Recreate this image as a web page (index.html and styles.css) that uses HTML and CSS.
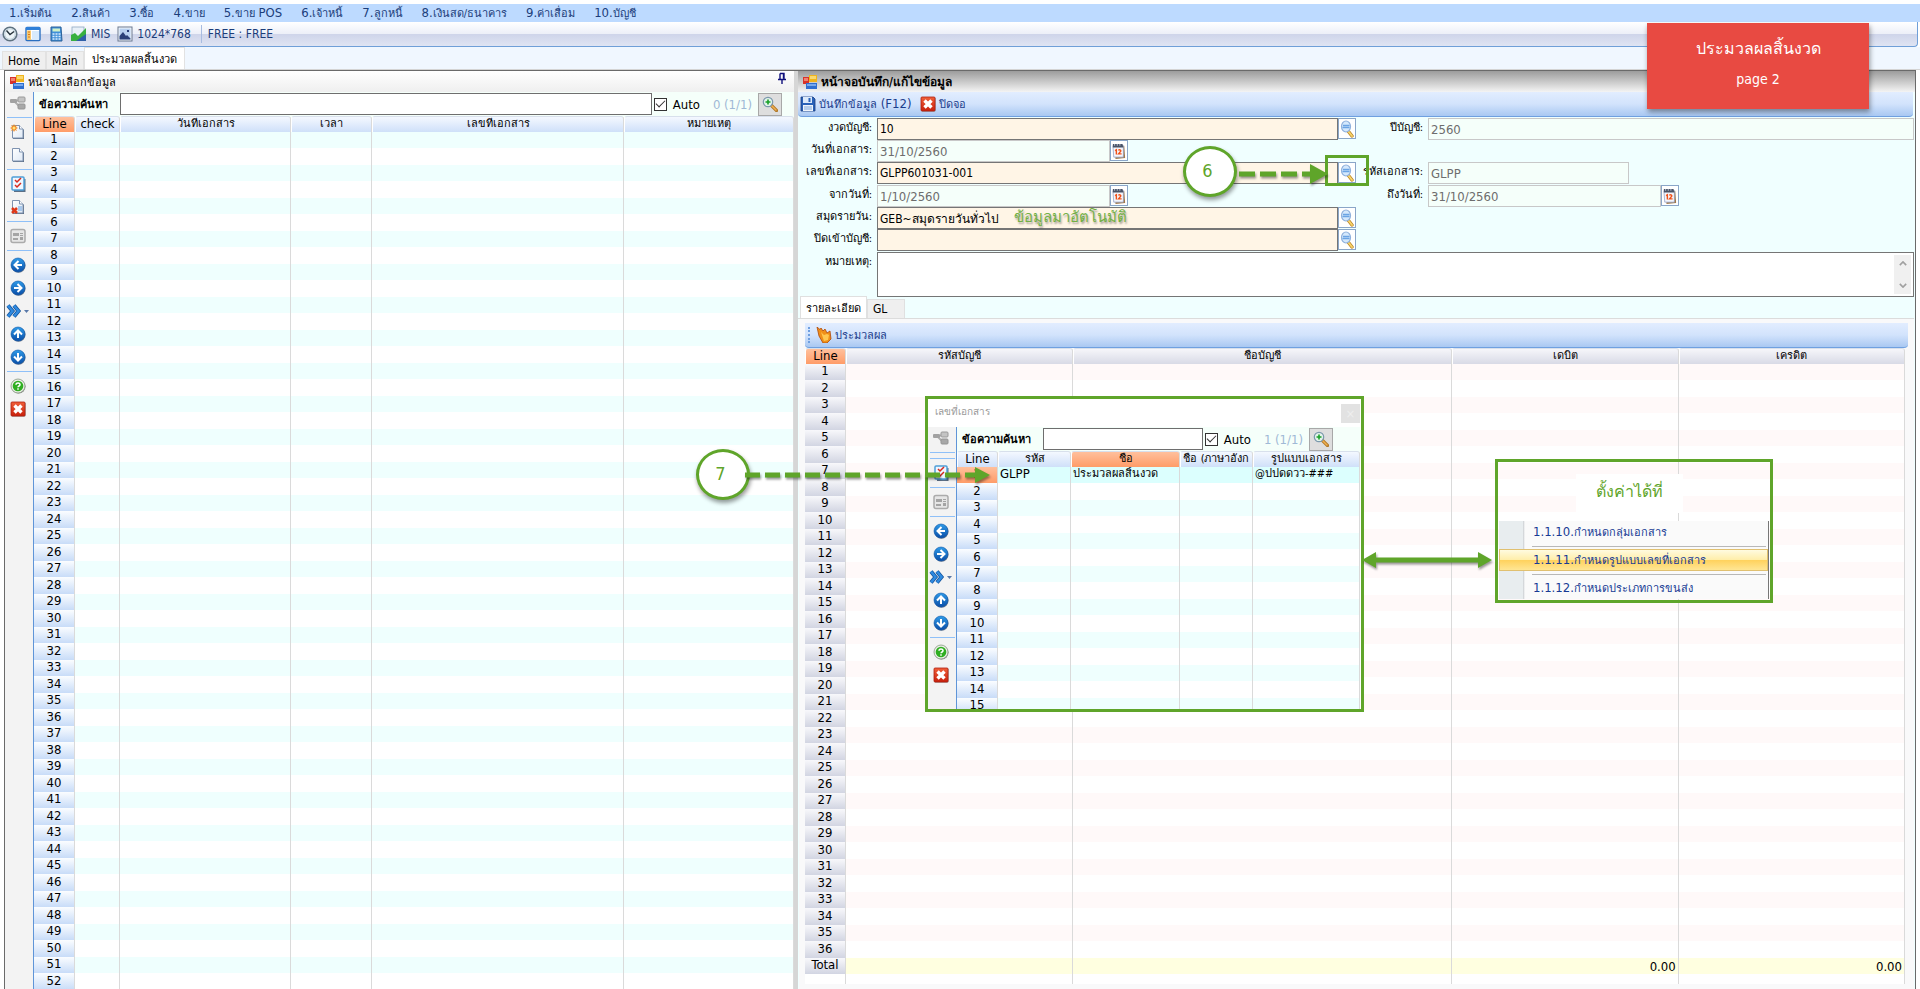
FILE: index.html
```html
<!DOCTYPE html>
<html lang="th">
<head>
<meta charset="utf-8">
<title>ประมวลผลสิ้นงวด</title>
<link rel="stylesheet" href="styles.css">
</head>
<body>
<svg class="sprite" aria-hidden="true">
  <defs>
    <linearGradient id="gBlue" x1="0" y1="0" x2="0" y2="1"><stop offset="0" stop-color="#2f9be8"/><stop offset="1" stop-color="#0a4ea8"/></linearGradient>
    <linearGradient id="gRed" x1="0" y1="0" x2="0" y2="1"><stop offset="0" stop-color="#f0603a"/><stop offset="1" stop-color="#c8200c"/></linearGradient>
    <linearGradient id="gPage" x1="0" y1="0" x2="1" y2="1"><stop offset="0" stop-color="#ffffff"/><stop offset="1" stop-color="#dfe9f5"/></linearGradient>
    <symbol id="i-form" viewBox="0 0 16 16"><rect x="1" y="3" width="6" height="7" fill="#d8322a"/><rect x="2" y="4" width="4" height="3" fill="#f08070"/><rect x="7" y="1" width="8" height="7" fill="#f0b41c"/><rect x="8" y="2" width="6" height="3" fill="#f8d870"/><rect x="4" y="9" width="11" height="6" fill="#2f6fd0"/><rect x="5" y="10" width="9" height="2" fill="#78a8ec"/></symbol>
    <symbol id="i-group" viewBox="0 0 16 16"><path d="M5 7l5-3M5 7l5 5" stroke="#b0b0b0" stroke-width="2" fill="none"/><rect x="0" y="4" width="7" height="4" rx="1" fill="#a2a2a2"/><rect x="8" y="2" width="7" height="5" rx="1" fill="#c4c4c4" stroke="#9a9a9a"/><rect x="8" y="9" width="7" height="5" rx="1" fill="#a8a8a8" stroke="#959595"/></symbol>
    <symbol id="i-page" viewBox="0 0 16 16"><path d="M3 2h7l4 4v9H3z" fill="#5f6f86"/><path d="M2.500 1.500h7L13 5v9H2.500z" fill="url(#gPage)" stroke="#7f93b0"/><path d="M9.500 1.500V5H13" fill="#fff" stroke="#7f93b0"/></symbol>
    <symbol id="i-new" viewBox="0 0 16 16"><use href="#i-page"/><path d="M4 0l1 2 2-1-1 2 2 1-2 1 1 2-2-1-1 2-1-2-2 1 1-2-2-1 2-1-1-2 2 1z" fill="#f08a24"/><circle cx="4" cy="4" r="1.500" fill="#ffe27a"/></symbol>
    <symbol id="i-check" viewBox="0 0 16 16"><path d="M14.500 3v12H4" fill="none" stroke="#5b6f86" stroke-width="2"/><rect x="2" y="1" width="12" height="13" rx="1" fill="#eef6ff" stroke="#4f9fd8" stroke-width="1.500"/><path d="M5 4l2 2 4-4M5 9l2 2 4-4" stroke="#d8281c" stroke-width="1.500" fill="none"/></symbol>
    <symbol id="i-del" viewBox="0 0 16 16"><use href="#i-page"/><rect x="8" y="7" width="4" height="5" fill="#a8c8ec"/><path d="M2 9l5 5M7 9l-5 5" stroke="#e03818" stroke-width="2.500"/></symbol>
    <symbol id="i-card" viewBox="0 0 16 16"><rect x="1" y="1.500" width="14" height="13" rx="2" fill="#e6e6e6" stroke="#ababab" stroke-width="1.500"/><path d="M3 5h6v3H3zM3 10h5v2H3zM10 5h3v1h-3zM10 7h3v1h-3zM10 9h3v3h-3z" fill="#a4a4a4"/></symbol>
    <symbol id="i-disc" viewBox="0 0 16 16"><circle cx="8.500" cy="8.700" r="7" fill="#6b7788"/><circle cx="8" cy="8" r="7" fill="url(#gBlue)" stroke="#0d56a8" stroke-width=".6"/></symbol>
    <symbol id="i-left" viewBox="0 0 16 16"><use href="#i-disc"/><path d="M12 8H5M8.500 4L4.500 8l4 4" stroke="#fff" stroke-width="2" fill="none"/></symbol>
    <symbol id="i-right" viewBox="0 0 16 16"><use href="#i-disc"/><path d="M4 8h7M7.500 4l4 4-4 4" stroke="#fff" stroke-width="2" fill="none"/></symbol>
    <symbol id="i-up" viewBox="0 0 16 16"><use href="#i-disc"/><path d="M8 12V5M4 8.500l4-4 4 4" stroke="#fff" stroke-width="2" fill="none"/></symbol>
    <symbol id="i-down" viewBox="0 0 16 16"><use href="#i-disc"/><path d="M8 4v7M4 7.500l4 4 4-4" stroke="#fff" stroke-width="2" fill="none"/></symbol>
    <symbol id="i-ff" viewBox="0 0 24 16"><path d="M2 2.500L6.500 8 2 13.500M8 2.500L12.500 8 8 13.500" stroke="#14549c" stroke-width="4" fill="none"/><path d="M2 2.500L6.500 8 2 13.500M8 2.500L12.500 8 8 13.500" stroke="#2f8ae0" stroke-width="2.500" fill="none"/><path d="M18 7h5l-2.500 3z" fill="#5878a8"/></symbol>
    <symbol id="i-help" viewBox="0 0 16 16"><circle cx="8.500" cy="8.600" r="7" fill="#777"/><circle cx="8" cy="8" r="7" fill="#e8efe4" stroke="#8a9a84" stroke-width=".8"/><circle cx="8" cy="8" r="5.300" fill="#2fae20"/><path d="M6 6.700c0-2.400 4-2.400 4 0 0 1.300-2 1.300-2 2.600M8 10.300v1.400" stroke="#fff" stroke-width="1.500" fill="none"/></symbol>
    <symbol id="i-close" viewBox="0 0 16 16"><rect x="1.500" y="1.500" width="14" height="14" rx="1" fill="#7a7a7a"/><rect x="1" y="1" width="14" height="14" rx="1" fill="url(#gRed)" stroke="#b02010" stroke-width=".8"/><path d="M4.500 4.500l7 7M11.500 4.500l-7 7" stroke="#fff" stroke-width="3.400"/></symbol>
    <symbol id="i-save" viewBox="0 0 16 16"><path d="M1 1h12l2 2v12H1z" fill="#2a62b8" stroke="#1a3c80" stroke-width=".8"/><rect x="3" y="1" width="9" height="6" fill="#dbe9fa"/><rect x="8.500" y="2" width="2" height="4" fill="#2a62b8"/><rect x="3" y="9" width="10" height="6" fill="#eef3fa"/><path d="M4 11h8M4 13h8" stroke="#7fa8dc"/></symbol>
    <symbol id="i-find" viewBox="0 0 14 18"><path d="M8.500 11.500l3.500 4.500" stroke="#b88428" stroke-width="3.400" stroke-linecap="round"/><path d="M8.500 11.500l3.500 4.500" stroke="#f8d468" stroke-width="2" stroke-linecap="round"/><ellipse cx="6" cy="6.500" rx="4.500" ry="5.500" fill="#d4e8fc" stroke="#8fb0dc" stroke-width="1.200"/><path d="M3 5.500h6.500M2.500 7.500h7" stroke="#6ba4e4" stroke-width="1.500"/></symbol>
    <symbol id="i-zoomin" viewBox="0 0 16 16"><path d="M9.500 9.500l5 5" stroke="#b07828" stroke-width="3.200" stroke-linecap="round"/><path d="M9.500 9.500l4.500 4.500" stroke="#f0b050" stroke-width="1.500" stroke-linecap="round"/><circle cx="6" cy="6" r="4.700" fill="#e2f2ea" stroke="#7a98ac" stroke-width="1.200"/><path d="M6 3.500v5M3.500 6h5" stroke="#18a028" stroke-width="1.600"/></symbol>
    <symbol id="i-cal" viewBox="0 0 16 18"><path d="M3 4l11-1 1 14-11 1z" fill="#a07848"/><path d="M1 3h12v13H2z" fill="#f4f6fc" stroke="#8898c0" stroke-width=".8"/><path d="M1 1h11l1 4H1z" fill="#4a5468"/><path d="M3 1v2M6 1v2M9 1v2" stroke="#c8d0e0"/><path d="M3.500 8.500L5 7.500V13M7.500 8.500c.5-1.500 3-1 2.500.8L7.500 12.300h3.500" stroke="#f05018" stroke-width="1.600" fill="none"/></symbol>
    <symbol id="i-clock" viewBox="0 0 16 16"><circle cx="8" cy="8" r="6.800" fill="#eef5f8" stroke="#5f7280" stroke-width="1.600"/><circle cx="8" cy="8" r="5.200" fill="none" stroke="#b8ccd8" stroke-width=".8"/><path d="M4.500 4.500L8 8.500l4-3" stroke="#26323c" stroke-width="1.400" fill="none"/></symbol>
    <symbol id="i-window" viewBox="0 0 16 16"><rect x="1" y="1.500" width="14" height="13" rx="1" fill="#fff" stroke="#2b6fc0" stroke-width="1.400"/><rect x="1" y="1" width="14" height="3" fill="#2f7fd8"/><rect x="2" y="4.500" width="4" height="9.500" fill="#f8c870"/><path d="M3 6h2M3 8.500h2M3 11h2" stroke="#d87818"/><rect x="7" y="5" width="7" height="9" fill="#d8eafc"/></symbol>
    <symbol id="i-calc" viewBox="0 0 16 16"><path d="M3 1h10l1 14H3z" fill="#3f8fd8" stroke="#2a6098"/><rect x="4.500" y="2.500" width="7.500" height="3" fill="#d0f0c8"/><path d="M4.500 8h8M4.500 10.500h8M4.500 13h8" stroke="#dcecfc" stroke-width="1.500" stroke-dasharray="2 1"/></symbol>
    <symbol id="i-chart" viewBox="0 0 16 16"><rect x="1" y="1" width="12" height="12" fill="#e8f0f8" stroke="#90a8c0" stroke-width=".8"/><path d="M0 15V9l4-2 3 3 8-8v13z" fill="#38b040"/><path d="M5 15l10-7v7z" fill="#2f5fa8"/></symbol>
    <symbol id="i-pic" viewBox="0 0 16 16"><rect x="1" y="1" width="14" height="14" fill="#f4f8fc" stroke="#6a7890"/><rect x="2.500" y="2.500" width="11" height="11" fill="#b8d0f0"/><path d="M2.500 13.500V10L6 6l3 4 1-1 3.500 3.500v1z" fill="#2a3f78"/><path d="M10 4l2 2M12 4l-2 2" stroke="#2a3f78"/></symbol>
    <symbol id="i-run" viewBox="0 0 16 16"><path d="M1 0l3 2.500L5 1l2 3 2-2 2 4 3-2 1 8-4 4H7L3 9z" fill="#f09018" stroke="#b04808" stroke-width=".8"/><path d="M5 5l3 3 3-1 2 1-1 5-4 1z" fill="#ffc850"/></symbol>
    <symbol id="i-pin" viewBox="0 0 10 12"><path d="M3 1.500h4V7M3 1.500V7M1 7.500h8M5 8v4M6.500 1.500v5" stroke="#10107c" stroke-width="1.400" fill="none"/></symbol>
  </defs>
</svg>

<div class="app">
  <nav class="menubar">
    <a href="#">1.<span class="th">เริ่มต้น</span></a><a href="#">2.<span class="th">สินค้า</span></a><a href="#">3.<span class="th">ซื้อ</span></a><a href="#">4.<span class="th">ขาย</span></a><a href="#">5.<span class="th">ขาย</span> POS</a><a href="#">6.<span class="th">เจ้าหนี้</span></a><a href="#">7.<span class="th">ลูกหนี้</span></a><a href="#">8.<span class="th">เงินสด/ธนาคาร</span></a><a href="#">9.<span class="th">ค่าเสื่อม</span></a><a href="#">10.<span class="th">บัญชี</span></a>
  </nav>
  <div class="toolbar">
    <button type="button" aria-label="Clock"><svg class="ic"><use href="#i-clock"/></svg></button>
    <button type="button" aria-label="Window"><svg class="ic"><use href="#i-window"/></svg></button>
    <button type="button" aria-label="Calculator"><svg class="ic"><use href="#i-calc"/></svg></button>
    <button type="button"><svg class="ic"><use href="#i-chart"/></svg>MIS</button>
    <button type="button"><svg class="ic"><use href="#i-pic"/></svg>1024*768</button>
    <span class="user">FREE : FREE</span>
  </div>
  <div class="tabs">
    <button type="button">Home</button><button type="button">Main</button><button type="button" class="on th">ประมวลผลสิ้นงวด</button>
  </div>

  <main class="work">
    <section class="pane pane-left">
      <header class="title"><svg class="ic"><use href="#i-form"/></svg><span class="th">หน้าจอเลือกข้อมูล</span><svg class="pin"><use href="#i-pin"/></svg></header>
      <div class="finder">
        <div class="side">
          <button type="button" aria-label="Group"><svg class="ic"><use href="#i-group"/></svg></button><hr>
          <button type="button" aria-label="New"><svg class="ic"><use href="#i-new"/></svg></button>
          <button type="button" aria-label="Page"><svg class="ic"><use href="#i-page"/></svg></button><hr>
          <button type="button" aria-label="Select"><svg class="ic"><use href="#i-check"/></svg></button>
          <button type="button" aria-label="Delete"><svg class="ic"><use href="#i-del"/></svg></button><hr>
          <button type="button" aria-label="Card"><svg class="ic"><use href="#i-card"/></svg></button><hr>
          <button type="button" aria-label="Previous"><svg class="ic"><use href="#i-left"/></svg></button>
          <button type="button" aria-label="Next"><svg class="ic"><use href="#i-right"/></svg></button>
          <button type="button" aria-label="Skip"><svg class="ic wide"><use href="#i-ff"/></svg></button>
          <button type="button" aria-label="Up"><svg class="ic"><use href="#i-up"/></svg></button>
          <button type="button" aria-label="Down"><svg class="ic"><use href="#i-down"/></svg></button><hr>
          <button type="button" aria-label="Help"><svg class="ic"><use href="#i-help"/></svg></button>
          <button type="button" aria-label="Close"><svg class="ic"><use href="#i-close"/></svg></button>
        </div>
        <div class="list">
          <div class="search">
            <label class="cap" for="q1">ข้อความค้นหา</label><input id="q1" type="text">
            <label class="auto"><input type="checkbox" checked>Auto</label><span class="count">0 (1/1)</span>
            <button type="button" class="go" aria-label="Search"><svg class="ic"><use href="#i-zoomin"/></svg></button>
          </div>
          <table class="grid aqua">
            <colgroup><col class="w-line"><col class="w-check"><col class="w-date"><col class="w-time"><col class="w-doc"><col></colgroup>
            <thead><tr><th class="hot">Line</th><th>check</th><th class="th">วันที่เอกสาร</th><th class="th">เวลา</th><th class="th">เลขที่เอกสาร</th><th class="th">หมายเหตุ</th></tr></thead>
            <tbody data-rows="52" data-cols="5"></tbody>
          </table>
        </div>
      </div>
    </section>

    <section class="pane pane-right">
      <header class="title dark"><svg class="ic"><use href="#i-form"/></svg><b>หน้าจอบันทึก/แก้ไขข้อมูล</b></header>
      <div class="bluebar">
        <button type="button"><svg class="ic"><use href="#i-save"/></svg><span><span class="th">บันทึกข้อมูล</span> (F12)</span></button>
        <button type="button"><svg class="ic"><use href="#i-close"/></svg><span class="th">ปิดจอ</span></button>
      </div>
      <form class="form">
        <div class="row">
          <label class="th" for="f1">งวดบัญชี:</label><div class="field req"><input id="f1" value="10"><button type="button" aria-label="Find"><svg><use href="#i-find"/></svg></button></div>
          <label class="th" for="f2">ปีบัญชี:</label><div class="field"><input id="f2" value="2560" disabled></div>
        </div>
        <div class="row">
          <label class="th" for="f3">วันที่เอกสาร:</label><div class="field date"><input id="f3" value="31/10/2560" disabled><button type="button" aria-label="Calendar"><svg><use href="#i-cal"/></svg></button></div>
        </div>
        <div class="row">
          <label class="th" for="f4">เลขที่เอกสาร:</label><div class="field req"><input id="f4" value="GLPP601031-001"><button type="button" aria-label="Find"><svg><use href="#i-find"/></svg></button></div>
          <label class="th" for="f5">รหัสเอกสาร:</label><div class="field code"><input id="f5" value="GLPP" disabled></div>
        </div>
        <div class="row">
          <label class="th" for="f6">จากวันที่:</label><div class="field date"><input id="f6" value="1/10/2560" disabled><button type="button" aria-label="Calendar"><svg><use href="#i-cal"/></svg></button></div>
          <label class="th" for="f7">ถึงวันที่:</label><div class="field date"><input id="f7" value="31/10/2560" disabled><button type="button" aria-label="Calendar"><svg><use href="#i-cal"/></svg></button></div>
        </div>
        <div class="row">
          <label class="th" for="f8">สมุดรายวัน:</label><div class="field req"><input id="f8" class="mix" value="GEB~สมุดรายวันทั่วไป"><button type="button" aria-label="Find"><svg><use href="#i-find"/></svg></button></div>
        </div>
        <div class="row">
          <label class="th" for="f9">ปิดเข้าบัญชี:</label><div class="field req"><input id="f9" value=""><button type="button" aria-label="Find"><svg><use href="#i-find"/></svg></button></div>
        </div>
        <div class="row memo">
          <label class="th" for="f10">หมายเหตุ:</label>
          <div class="memobox"><textarea id="f10"></textarea><div class="scroll"><svg viewBox="0 0 10 6"><path d="M1 5l4-4 4 4"/></svg><svg viewBox="0 0 10 6"><path d="M1 1l4 4 4-4"/></svg></div></div>
        </div>
      </form>
      <div class="subtabs"><button type="button" class="on th">รายละเอียด</button><button type="button">GL</button></div>
      <div class="detail">
        <div class="bluebar small"><button type="button"><svg class="ic"><use href="#i-run"/></svg><span class="th">ประมวลผล</span></button></div>
        <table class="grid rose">
          <colgroup><col class="w-line2"><col class="p-num"><col class="p-name"><col class="p-num"><col></colgroup>
          <thead><tr><th class="hot">Line</th><th class="th">รหัสบัญชี</th><th class="th">ชื่อบัญชี</th><th class="th">เดบิต</th><th class="th">เครดิต</th></tr></thead>
          <tbody data-rows="36" data-cols="4"></tbody>
          <tfoot><tr class="total"><th>Total</th><td></td><td></td><td>0.00</td><td>0.00</td></tr><tr class="tail"><td></td><td></td><td></td><td></td><td></td></tr></tfoot>
        </table>
      </div>
    </section>
  </main>

  <section class="popup">
    <header class="poptitle"><span>เลขที่เอกสาร</span><button type="button" aria-label="Close">×</button></header>
    <div class="finder">
      <div class="side">
        <button type="button" aria-label="Group"><svg class="ic"><use href="#i-group"/></svg></button><hr><hr>
        <button type="button" aria-label="Select"><svg class="ic"><use href="#i-check"/></svg></button><hr>
        <button type="button" aria-label="Card"><svg class="ic"><use href="#i-card"/></svg></button><hr>
        <button type="button" aria-label="Previous"><svg class="ic"><use href="#i-left"/></svg></button>
        <button type="button" aria-label="Next"><svg class="ic"><use href="#i-right"/></svg></button>
        <button type="button" aria-label="Skip"><svg class="ic wide"><use href="#i-ff"/></svg></button>
        <button type="button" aria-label="Up"><svg class="ic"><use href="#i-up"/></svg></button>
        <button type="button" aria-label="Down"><svg class="ic"><use href="#i-down"/></svg></button><hr>
        <button type="button" aria-label="Help"><svg class="ic"><use href="#i-help"/></svg></button>
        <button type="button" aria-label="Close"><svg class="ic"><use href="#i-close"/></svg></button>
      </div>
      <div class="list">
        <div class="search">
          <label class="cap" for="q2">ข้อความค้นหา</label><input id="q2" type="text">
          <label class="auto"><input type="checkbox" checked>Auto</label><span class="count">1 (1/1)</span>
          <button type="button" class="go" aria-label="Search"><svg class="ic"><use href="#i-zoomin"/></svg></button>
        </div>
        <table class="grid aqua">
          <colgroup><col class="w-line"><col class="w-c1"><col class="w-c2"><col class="w-c1"><col></colgroup>
          <thead><tr><th>Line</th><th class="th">รหัส</th><th class="th hot">ชื่อ</th><th class="th">ชื่อ (ภาษาอังก</th><th class="th">รูปแบบเอกสาร</th></tr></thead>
          <tbody data-rows="15" data-cols="4" data-first="GLPP|ประมวลผลสิ้นงวด||@ปปดดวว-###"></tbody>
        </table>
      </div>
    </div>
  </section>

  <aside class="hint">
    <p>ตั้งค่าได้ที่</p>
    <nav>
      <a href="#">1.1.10.<span class="th">กำหนดกลุ่มเอกสาร</span></a>
      <a href="#" class="sel">1.1.11.<span class="th">กำหนดรูปแบบเลขที่เอกสาร</span></a>
      <a href="#">1.1.12.<span class="th">กำหนดประเภทการขนส่ง</span></a>
    </nav>
  </aside>

  <div class="banner"><p>ประมวลผลสิ้นงวด</p><p class="pg">page 2</p></div>
  <p class="note">ข้อมูลมาอัตโนมัติ</p>
  <div class="target"></div>
  <div class="step step6">6</div>
  <div class="step step7">7</div>
  <svg class="arrow a6" viewBox="0 0 90 22"><path d="M0 11h74" stroke-dasharray="16 5"/><path class="tip" d="M71 1l18 10-18 10z"/></svg>
  <svg class="arrow a7" viewBox="0 0 246 18"><path d="M0 9h230" stroke-dasharray="15 5"/><path class="tip" d="M230 1l15 8-15 8z"/></svg>
  <svg class="arrow a8" viewBox="0 0 132 18"><path d="M12 9h108"/><path class="tip" d="M15 1L1 9l14 8zM117 1l14 8-14 8z"/></svg>
</div>
<script src="app.js"></script>
</body>
</html>
```

FILE: styles.css
```css
* { box-sizing: border-box; }
html, body { height: 100%; margin: 0; }
body, button, input, textarea, table {
  font-family: "DejaVu Sans Condensed", sans-serif;
  font-size: 13px;
}
body { overflow: hidden; background: #fff; color: #000; }
button { border: 0; padding: 0; background: none; color: inherit; display: flex; align-items: center; }
p { margin: 0; }
.th { font-size: 11px; }
.sprite { position: absolute; width: 0; height: 0; }
.ic { width: 16px; height: 16px; flex: none; }
.ic.wide { width: 24px; }

.app { position: relative; height: 100vh; display: flex; flex-direction: column; padding-top: 4px; }

.menubar { display: flex; align-items: center; gap: 19px; flex: none; height: 18px; padding-left: 9px; background: #bddaff; }
.menubar a { color: #1b3d7a; text-decoration: none; line-height: 18px; white-space: nowrap; }
.toolbar {
  display: flex; align-items: center; gap: 7px; flex: none; height: 25px; margin-right: 2px; padding-left: 2px;
  background: linear-gradient(#fff 0, #eceff8 50%, #cfd5ea 52%, #dfe4f3 100%);
  border-bottom: 1px solid #6f9fd8; border-right: 1px solid #6f9fd8; border-radius: 0 0 4px 0; color: #1b3d7a;
}
.toolbar button { gap: 4px; font-size: 12px; }
.toolbar .user { margin-left: 3px; padding-left: 6px; border-left: 1px solid #a8bce0; line-height: 18px; font-size: 12px; }

.tabs { display: flex; align-items: flex-end; flex: none; height: 23px; padding-left: 2px; background: #f0f7ff; border-bottom: 1px solid #d4d4d4; }
.tabs button { height: 18px; padding: 0 5px; background: #efefef; border: 1px solid #e2e2e2; border-bottom: 0; font-size: 12px; }
.tabs .on { height: 22px; padding: 0 7px; background: #fff; font-size: 11px; }

.work { flex: 1; min-height: 0; display: flex; margin: 0 4px 0 4px; border: 1px solid #6a6a6a; border-bottom: 0; overflow: hidden; }
.pane { display: flex; flex-direction: column; min-width: 0; }
.pane-left { flex: 789 1 0; border-right: 4px solid #d6d6d6; }
.pane-right { flex: 1117 1 0; background: #f0ffff; }
.title { display: flex; align-items: center; gap: 3px; flex: none; height: 21px; padding-left: 4px; background: linear-gradient(#fff, #efefef); }
.title b { font-size: 12px; }
.title.dark { background: linear-gradient(#9c9c9c, #f4f4f4); }
.title .pin { width: 10px; height: 12px; margin: -8px 7px 0 auto; }

.finder { flex: 1; min-height: 0; display: flex; background: #f5fffa; }
.side { flex: none; width: 29px; background: #f3f3f3; border-right: 1px solid #5f95d8; display: flex; flex-direction: column; }
.side button { height: 23px; justify-content: center; margin-right: 2px; padding-bottom: 2px; }
.side hr { width: 25px; height: 1px; margin: 2px 0 3px 2px; border: 0; background: #8fc0f8; }
.list { flex: 1; min-width: 0; overflow: hidden; }
.search { display: flex; align-items: center; height: 24px; padding: 0 12px 0 5px; }
.search .cap { width: 81px; font-weight: bold; font-size: 11px; white-space: nowrap; }
.search input[type=text] { flex: 1; min-width: 0; height: 22px; border: 1px solid #6e6e6e; background: #fff; }
.auto { display: flex; align-items: center; gap: 6px; padding-left: 2px; }
.auto input { appearance: none; width: 13px; height: 13px; margin: 0; border: 1px solid #333; background: #fff; display: grid; place-items: center; }
.auto input:checked::after { content: ""; width: 8px; height: 4px; margin-top: -3px; border: solid #333; border-width: 0 0 1px 1px; transform: rotate(-45deg); }
.count { padding: 0 6px 0 13px; color: #9fb9d6; }
.go { width: 24px; height: 23px; justify-content: center; background: #dedede; border: 1px solid #a8a8a8; }

.grid { width: 100%; table-layout: fixed; border-collapse: separate; border-spacing: 0; }
.grid th, .grid td { padding: 0; line-height: 15px; height: 17px; font-weight: normal; vertical-align: top; overflow: hidden; white-space: nowrap; border-right: 1px solid #dadada; }
.grid thead th { height: 16px; background: linear-gradient(#f4f8ff, #cfe0f9); border-left: 1px solid #fff; border-top: 1px solid #d8e0ec; border-radius: 3px 3px 0 0; line-height: 13px; }
.grid tbody tr:nth-child(odd) > * { height: 16px; line-height: 14px; }
.grid tbody tr:nth-child(odd) td { background: #effffe; }
.grid tbody td { background: #fff; padding-left: 2px; }
.grid tbody th { background: linear-gradient(#fbfdff, #c8dcf8); }
.grid thead th.hot, .grid tbody tr th.hot { background: linear-gradient(#ffc09c, #ff9c68); }
.grid tbody tr.picked td { background: #dcfffe; }
.grid.rose tbody tr:nth-child(odd) td { background: #fff9f9; }
.grid.rose thead th { background: linear-gradient(#f6f6fa, #d8dae6); }
.grid.rose thead th.hot { background: linear-gradient(#ffc09c, #ff9c68); }
.grid.rose tbody th, .grid.rose tfoot th { background: linear-gradient(#f8f8fb, #d2d5e2); }
.grid .total th { height: 16px; line-height: 14px; }
.grid .total td { background: #ffffe0; text-align: right; padding: 2px 2px 0 0; height: 16px; line-height: 14px; }
.grid .tail td { background: #fff; height: 10px; line-height: 8px; }
.w-line { width: 41px; } .w-check { width: 45px; } .w-date { width: 171px; } .w-time { width: 81px; } .w-doc { width: 252px; }
.w-line2 { width: 41px; } .p-name { width: 34.5%; } .p-num { width: 20.6%; }
.w-c1 { width: 73px; } .w-c2 { width: 109px; }

.bluebar { display: flex; align-items: center; gap: 9px; flex: none; height: 25px; padding-left: 2px; margin-right: 2px; color: #1b3d8c; background: linear-gradient(#e2edff 0, #d2e3fc 50%, #a9c8f2 100%); border-bottom: 1px solid #6fa0e0; border-radius: 0 0 4px 4px; }
.bluebar button { gap: 3px; }

.form { flex: none; padding: 1px 1px 0 0; }
.row { display: grid; grid-template-columns: 79px 479fr 72px 486fr; height: 22px; }
.row:nth-child(3n) { height: 23px; }
.row label { text-align: right; padding-right: 5px; line-height: 19px; white-space: nowrap; }
.field { display: flex; min-width: 0; }
.field input { flex: 1; min-width: 0; height: 22px; padding: 0 2px; border: 1px solid #c8c8c8; background: #f5fffa; color: #6d6d6d; }
.field.req input { border-color: #757575; background: #fff5e6; color: #000; font-size: 12px; }
.field button { width: 18px; height: 21px; justify-content: center; border: 1px solid #8aa6c8; background: #fff; }
.field button svg { width: 14px; height: 18px; }
.date { width: 251px; }
.code { width: 201px; }
.row.memo { grid-template-columns: 79px 1fr; height: 45px; }
.memobox { display: flex; border: 1px solid #757575; background: #fff; padding: 2px; }
.memobox textarea { flex: 1; border: 0; padding: 0; resize: none; outline: 0; }
.scroll { width: 17px; background: #f0f0f0; display: flex; flex-direction: column; justify-content: space-between; align-items: center; padding: 6px 0; }
.scroll svg { width: 8px; height: 5px; fill: none; stroke: #a0a0a0; stroke-width: 2px; }

.subtabs { flex: none; display: flex; align-items: flex-end; height: 22px; margin-right: 1px; padding-left: 2px; border-bottom: 1px solid #dcdcdc; }
.subtabs button { height: 19px; padding: 0 5px; background: #efefef; border: 1px solid #e0e0e0; border-bottom: 0; width: 38px; font-size: 12px; }
.subtabs .on { width: auto; height: 22px; background: #fff; font-size: 11px; }
.detail { flex: 1; margin: 0 1px 0 1px; padding: 4px 9px 0 6px; background: #f9f9fa; min-height: 0; }
.bluebar.small { margin-right: -3px; padding-left: 11px; }
.bluebar.small::before { content: ""; height: 16px; border-left: 2px dotted #6f9fe0; margin-left: -8px; margin-right: -3px; }

.popup { position: absolute; left: 925px; top: 396px; width: 439px; height: 316px; display: flex; flex-direction: column; border: 3px solid #5fa52a; background: #fff; padding-right: 1px; }
.poptitle { flex: none; display: flex; justify-content: space-between; height: 28px; padding: 5px 0 0 7px; color: #9a9a9a; font-size: 10px; }
.poptitle span { line-height: 16px; }
.poptitle button { width: 19px; height: 19px; background: #e2e2e2; color: #eee; justify-content: center; }
.popup .search { padding-right: 27px; }

.hint { position: absolute; left: 1495px; top: 459px; width: 278px; height: 144px; border: 3px solid #5fa52a; }
.hint p { width: 107px; height: 39px; margin: 12px auto 0 78px; background: #fff; text-align: center; line-height: 36px; font-size: 16px; color: #5fa52a; }
.hint nav { display: flex; flex-direction: column; margin: 8px 1px 0 1px; background: linear-gradient(90deg, #e8edef 24px, #c8ccd0 24px, #fafafa 26px); border-right: 1px solid #777; }
.hint a { height: 22px; margin-bottom: 6px; padding-left: 33px; line-height: 20px; color: #173a94; text-decoration: none; position: relative; white-space: nowrap; border: 1px solid transparent; }
.hint a:last-child { margin: 0; }
.hint a:not(:last-child)::after { content: ""; position: absolute; left: 32px; right: 1px; bottom: -5px; height: 1px; background: #b8b8b8; }
.hint .sel { background: linear-gradient(#fffbe0 0, #ffeeaa 48%, #ffd25e 52%, #ffe694 100%); border-color: #e0c070; }

.banner { position: absolute; left: 1647px; top: 23px; width: 222px; height: 86px; padding-top: 11px; background: #e84a42; color: #fff; text-align: center; box-shadow: 1px 3px 5px rgba(0, 0, 0, .4); font-size: 16px; line-height: 30px; }
.banner .pg { font-size: 14px; line-height: 30px; }
.note { position: absolute; left: 1014px; top: 206px; font-size: 15px; line-height: 22px; color: #72b045; text-shadow: 1px 2px 2px rgba(0, 0, 0, .35); white-space: nowrap; }
.target { position: absolute; left: 1325px; top: 155px; width: 44px; height: 31px; border: 3px solid #5fa52a; }
.step { position: absolute; width: 54px; height: 51px; border: 3px solid #5fa52a; border-radius: 50%; background: #fff; color: #5fa52a; font-size: 18px; line-height: 43px; text-align: center; padding-right: 5px; box-shadow: 1px 3px 4px rgba(0, 0, 0, .4); }
.step6 { left: 1183px; top: 146px; }
.step7 { left: 696px; top: 449px; }
.arrow { position: absolute; fill: none; stroke: #5fa52a; stroke-width: 5px; filter: drop-shadow(1px 2px 1px rgba(0, 0, 0, .4)); }
.arrow .tip { fill: #5fa52a; stroke: none; }
.a6 { left: 1239px; top: 163px; width: 90px; height: 22px; }
.a7 { left: 745px; top: 466px; width: 246px; height: 18px; }
.a8 { left: 1361px; top: 551px; width: 132px; height: 18px; }
```

FILE: app.js
```js
document.querySelectorAll('tbody[data-rows]').forEach(function (body) {
  var rows = Number(body.dataset.rows);
  var cols = Number(body.dataset.cols);
  var first = body.dataset.first ? body.dataset.first.split('|') : null;
  for (var r = 1; r <= rows; r++) {
    var tr = body.insertRow();
    var head = document.createElement('th');
    head.textContent = r;
    tr.appendChild(head);
    for (var c = 0; c < cols; c++) {
      var td = tr.insertCell();
      if (first && r === 1) {
        td.textContent = first[c];
        if (/[\u0e00-\u0e7f]/.test(first[c])) td.className = 'th';
      }
    }
    if (first && r === 1) {
      tr.className = 'picked';
      head.className = 'hot';
    }
  }
});
```
